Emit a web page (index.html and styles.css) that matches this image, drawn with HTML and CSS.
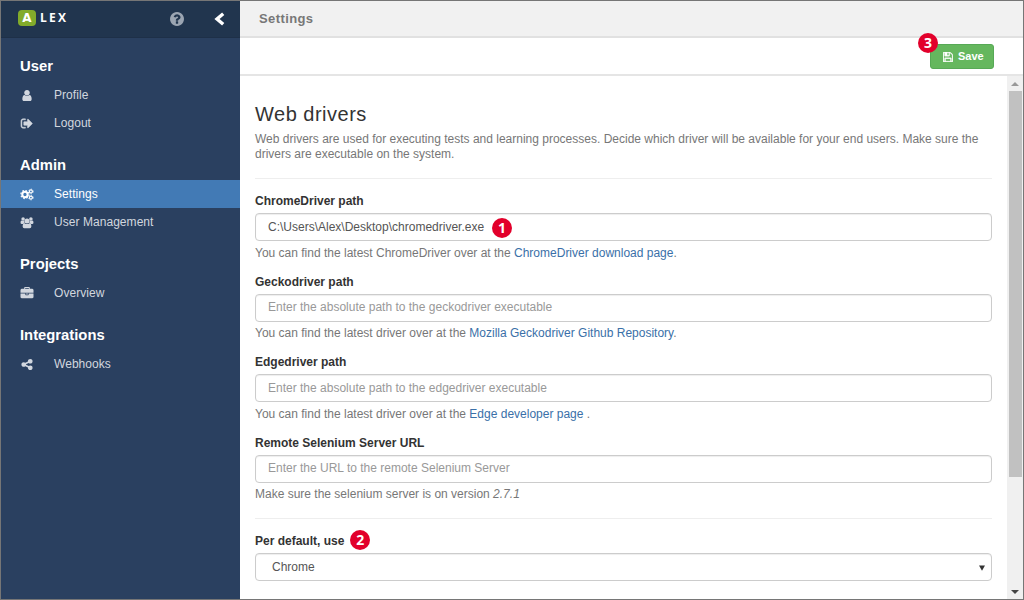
FILE: index.html
```html
<!DOCTYPE html>
<html lang="en">
<head>
<meta charset="utf-8">
<title>ALEX - Settings</title>
<link rel="stylesheet" href="styles.css">
</head>
<body>
<div class="app">
  <aside class="sidebar">
    <div class="brand">
      <span class="logo">A</span><span class="brand-name">LEX</span>
      <svg class="help" viewBox="128 128 1536 1536"><path d="M1024 1376v-192q0-14-9-23t-23-9h-192q-14 0-23 9t-9 23v192q0 14 9 23t23 9h192q14 0 23-9t9-23zm256-672q0-88-55.500-163t-138.500-116-170-41q-243 0-371 213-15 24 8 42l132 100q7 6 19 6 16 0 25-12 53-68 86-92 34-24 86-24 48 0 85.500 26t37.500 59q0 38-20 61t-68 45q-63 28-115.500 86.500t-52.500 125.500v36q0 14 9 23t23 9h192q14 0 23-9t9-23q0-19 21.500-49.500t54.500-49.500q32-18 49-28.500t46-35 44.500-48 28-60.500 12.500-81zm384 192q0 209-103 385.500t-279.500 279.500-385.500 103-385.500-103-279.500-279.500-103-385.500 103-385.500 279.500-279.500 385.500-103 385.500 103 279.500 279.500 103 385.500z"/></svg>
      <svg class="collapse" viewBox="0 0 11 14"><path d="M9.200 1.700 3 7l6.200 5.300" fill="none" stroke="#fff" stroke-width="3.400"/></svg>
    </div>
    <nav class="nav">
      <h2 class="nav-title">User</h2>
      <a class="nav-item"><svg class="icon" viewBox="0 0 1792 1792"><path d="M1536 1399q0 109-62.500 187t-150.500 78h-854q-88 0-150.500-78t-62.500-187q0-85 8.500-160.500t31.500-152 58.500-131 94-89 134.500-34.500q131 128 313 128t313-128q76 0 134.500 34.500t94 89 58.500 131 31.500 152 8.500 160.500zm-256-887q0 159-112.500 271.500t-271.500 112.500-271.500-112.500-112.500-271.500 112.500-271.500 271.500-112.500 271.500 112.500 112.500 271.500z"/></svg>Profile</a>
      <a class="nav-item"><svg class="icon" viewBox="0 0 1792 1792"><path d="M704 1440q0 4 1 20t.5 26.500-3 23.500-10 19.500-20.500 6.500h-320q-119 0-203.500-84.500t-84.500-203.500v-704q0-119 84.500-203.500t203.500-84.500h320q13 0 22.500 9.500t9.500 22.500q0 4 1 20t.5 26.500-3 23.500-10 19.500-20.500 6.500h-320q-66 0-113 47t-47 113v704q0 66 47 113t113 47h312l11.500 1 11.500 3 8 5.500 7 9 2 13.500zm928-544q0 26-19 45l-544 544q-19 19-45 19t-45-19-19-45v-288h-448q-26 0-45-19t-19-45v-384q0-26 19-45t45-19h448v-288q0-26 19-45t45-19 45 19l544 544q19 19 19 45z" stroke="currentColor" stroke-width="70"/></svg>Logout</a>
      <h2 class="nav-title">Admin</h2>
      <a class="nav-item active"><svg class="icon" viewBox="0 0 14 14"><g fill="none" stroke="currentColor"><circle cx="4.800" cy="7" r="2.900" stroke-width="2.200"/><circle cx="4.800" cy="7" r="4.400" stroke-width="1.200" stroke-dasharray="1.730 1.730"/><circle cx="11.200" cy="3.700" r="1.600" stroke-width="1.300"/><circle cx="11.200" cy="3.700" r="2.500" stroke-width=".8" stroke-dasharray="1.310 1.310"/><circle cx="11.200" cy="10.300" r="1.600" stroke-width="1.300"/><circle cx="11.200" cy="10.300" r="2.500" stroke-width=".8" stroke-dasharray="1.310 1.310"/></g></svg>Settings</a>
      <a class="nav-item"><svg class="icon" viewBox="0 0 14 14"><circle cx="2.800" cy="3.300" r="1.900"/><circle cx="11.200" cy="3.300" r="1.900"/><path d="M.1 7.600V6.500q0-1.700 1.200-1.700 1.300.8 2.800.1-.2 1.600.5 2.800-1 0-1.800.8H1.500Q.1 8.500.1 7.600zM13.900 7.600V6.500q0-1.700-1.200-1.700-1.300.8-2.800.1.200 1.600-.5 2.800 1 0 1.800.8h1.300q1.400 0 1.400-.9z"/><circle cx="7" cy="5.400" r="2.700"/><path d="M2.300 11.200q0-3.400 2.200-3.400 1 .9 2.500.9t2.500-.9q2.200 0 2.200 3.400 0 1.900-1.800 1.900H4.100q-1.800 0-1.800-1.900z"/></svg>User Management</a>
      <h2 class="nav-title">Projects</h2>
      <a class="nav-item"><svg class="icon" viewBox="0 0 1792 1792"><path d="M640 256h512v-128h-512v128zm1152 640v480q0 66-47 113t-113 47h-1472q-66 0-113-47t-47-113v-480h672v160q0 26 19 45t45 19h320q26 0 45-19t19-45v-160h672zm-768 0v128h-256v-128h256zm768-480v384h-1792v-384q0-66 47-113t113-47h352v-160q0-40 28-68t68-28h576q40 0 68 28t28 68v160h352q66 0 113 47t47 113z"/></svg>Overview</a>
      <h2 class="nav-title">Integrations</h2>
      <a class="nav-item"><svg class="icon" viewBox="0 0 1792 1792"><path d="M1344 1024q133 0 226.500 93.500t93.500 226.500-93.500 226.500-226.500 93.500-226.500-93.500-93.500-226.500q0-12 2-34l-360-180q-92 86-218 86-133 0-226.500-93.500t-93.500-226.500 93.500-226.500 226.500-93.500q126 0 218 86l360-180q-2-22-2-34 0-133 93.500-226.500t226.500-93.500 226.500 93.500 93.500 226.500-93.500 226.500-226.500 93.500q-126 0-218-86l-360 180q2 22 2 34t-2 34l360 180q92-86 218-86z"/></svg>Webhooks</a>
    </nav>
  </aside>
  <div class="main">
    <header class="title-bar">Settings</header>
    <div class="action-bar">
      <button class="save"><svg viewBox="128 128 1536 1536"><path d="M512 1536h768v-384h-768v384zm896 0h128v-896q0-14-10-38.500t-20-34.500l-281-281q-10-10-34-20t-39-10v416q0 40-28 68t-68 28h-576q-40 0-68-28t-28-68v-416h-128v1280h128v-416q0-40 28-68t68-28h832q40 0 68 28t28 68v416zm-384-928v-320q0-13-9.500-22.500t-22.500-9.500h-192q-13 0-22.500 9.500t-9.500 22.500v320q0 13 9.500 22.500t22.500 9.500h192q13 0 22.500-9.500t9.500-22.500zm640 32v928q0 40-28 68t-68 28h-1344q-40 0-68-28t-28-68v-1344q0-40 28-68t68-28h928q40 0 88 20t76 48l280 280q28 28 48 76t20 88z"/></svg>Save<span class="badge badge-save">3</span></button>
    </div>
    <div class="body">
      <main class="content">
        <h1 class="heading">Web drivers</h1>
        <p class="intro">Web drivers are used for executing tests and learning processes. Decide which driver will be available for your end users. Make sure the<br>drivers are executable on the system.</p>
        <hr class="rule">
        <div class="field">
          <label class="label">ChromeDriver path</label>
          <div class="control"><span class="value">C:\Users\Alex\Desktop\chromedriver.exe</span><span class="badge badge-path">1</span></div>
          <p class="hint">You can find the latest ChromeDriver over at the <a class="link">ChromeDriver download page</a>.</p>
        </div>
        <div class="field">
          <label class="label">Geckodriver path</label>
          <div class="control"><span class="placeholder">Enter the absolute path to the geckodriver executable</span></div>
          <p class="hint">You can find the latest driver over at the <a class="link">Mozilla Geckodriver Github Repository</a>.</p>
        </div>
        <div class="field">
          <label class="label">Edgedriver path</label>
          <div class="control"><span class="placeholder">Enter the absolute path to the edgedriver executable</span></div>
          <p class="hint">You can find the latest driver over at the <a class="link">Edge developer page</a> .</p>
        </div>
        <div class="field field-last">
          <label class="label">Remote Selenium Server URL</label>
          <div class="control"><span class="placeholder">Enter the URL to the remote Selenium Server</span></div>
          <p class="hint">Make sure the selenium server is on version <em>2.7.1</em></p>
        </div>
        <hr class="rule">
        <div class="field">
          <label class="label">Per default, use<span class="badge badge-use">2</span></label>
          <div class="control select"><span class="value">Chrome</span><svg class="caret" viewBox="0 0 6 6"><path d="M0 .5h6L3 5.800z"/></svg></div>
        </div>
      </main>
      <div class="scrollbar">
        <svg class="arrow up" viewBox="0 0 8 4"><path d="M0 4h8L4 0z"/></svg>
        <div class="thumb"></div>
        <svg class="arrow down" viewBox="0 0 8 4"><path d="M0 0h8L4 4z"/></svg>
      </div>
    </div>
  </div>
</div>
</body>
</html>
```
FILE: styles.css
```css
* { box-sizing: border-box; }
body { margin: 0; font: 12px/15px "Liberation Sans", Arial, sans-serif; color: #777; }
h1, h2, p { margin: 0; }
.app { display: flex; width: 1024px; height: 600px; border: 1px solid #767676; overflow: hidden; background: #fff; }
.sidebar { width: 239px; flex: none; background: #2a4060; color: #d2d7df; }
.brand { height: 37px; display: flex; align-items: center; padding: 0 15px 2px 17px; background: #21354e; border-bottom: 1px solid #1e3048; color: #fff; }
.logo { width: 18px; height: 16px; border-radius: 4px; background: #82ab2b; text-align: center; font: bold 12px/16px "DejaVu Sans", sans-serif; }
.brand-name { margin-left: 4px; font: bold 12px/16px "Open Sans", sans-serif; letter-spacing: 2.3px; }
.help { width: 14px; height: 14px; margin: 1px 0 0 auto; fill: #9ba5b2; }
.collapse { width: 11px; height: 14px; margin: 1px 0 0 30px; }
.nav-title { margin: 0 0 5px 19px; padding-top: 19px; height: 38px; font-size: 14.800px; line-height: 18px; color: #fff; }
.nav-item { display: flex; align-items: center; height: 28px; padding-left: 19px; letter-spacing: .05px; }
.icon { width: 14px; height: 13px; margin-right: 20px; fill: currentColor; }
.active { background: #427ab5; color: #fff; }
.main { flex: 1; display: flex; flex-direction: column; min-width: 0; }
.title-bar { height: 37px; flex: none; padding: 9px 19px; background: #f1f1f1; border-bottom: 2px solid #e1e1e1; font-size: 13px; line-height: 17px; font-weight: bold; letter-spacing: .4px; }
.action-bar { height: 38px; flex: none; display: flex; justify-content: flex-end; padding: 6px 29px 0 0; border-bottom: 2px solid #e5e5e5; }
.save { position: relative; display: flex; align-items: center; width: 64px; height: 25px; padding: 0 0 0 12px; border: 1px solid #57a956; border-radius: 3px; background: #65b75e; color: #fff; font: bold 11px/15px "Liberation Sans", sans-serif; }
.save svg { width: 10px; height: 10px; margin-right: 5px; fill: #fff; stroke: #fff; stroke-width: 60px; }
.body { flex: 1; display: flex; min-height: 0; }
.content { flex: 1; min-width: 0; padding: 25px 15px 0; }
.heading { font-size: 20px; line-height: 26px; font-weight: normal; letter-spacing: .5px; color: #333; }
.intro { margin-top: 5px; white-space: nowrap; }
.rule { height: 1px; margin: 16px 0 15px; border: 0; background: #eee; }
.field { height: 80.500px; }
.field-last { height: 66.500px; }
.label { display: flex; align-items: center; height: 15px; font-weight: bold; color: #333; }
.control { position: relative; height: 28px; margin: 4.400px 0 4.600px; display: flex; padding: 5.400px 12px; border: 1px solid #ccc; border-radius: 4px; box-shadow: inset 0 1px 1px #eee; }
.value { color: #555; }
.placeholder { color: #999; }
.link { color: #3a70a8; }
.select { padding-left: 16px; }
.caret { width: 6px; height: 6px; margin: 5px -6px 0 auto; fill: #333; }
.badge { width: 20px; height: 20px; border-radius: 50%; background: #e2002b; color: #fff; text-align: center; font: bold 14px/20px "Open Sans", sans-serif; }
.badge-path { position: absolute; left: 236px; top: 4px; }
.badge-save { position: absolute; left: -13px; top: -12px; }
.badge-use { margin: -3px 0 0 6px; }
.scrollbar { width: 16px; flex: none; display: flex; flex-direction: column; align-items: center; background: #f0f0f0; }
.thumb { width: 13px; height: 386px; background: #c1c1c1; }
.arrow { width: 8px; height: 4px; }
.up { margin: 6px 0 5px; fill: #999; }
.down { margin: auto 0 5px; fill: #444; }
```
